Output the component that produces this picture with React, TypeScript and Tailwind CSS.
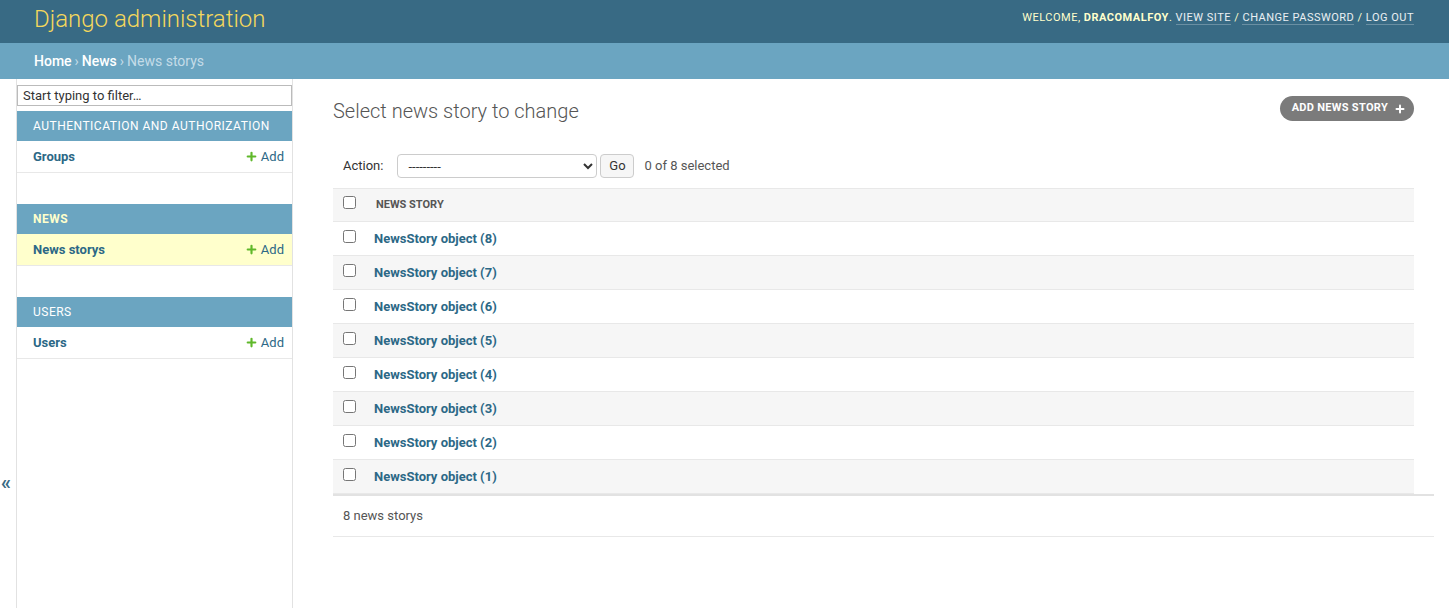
import { Plus } from 'lucide-react';

const stories = [8, 7, 6, 5, 4, 3, 2, 1];

const modules = [
  { caption: 'Authentication and Authorization', current: false, rows: ['Groups'] },
  { caption: 'News', current: true, rows: ['News storys'] },
  { caption: 'Users', current: false, rows: ['Users'] },
];

function Box() {
  return <input type="checkbox" className="m-0 h-[13px] w-[13px] rounded-[3px] accent-[#417690]" />;
}

export default function App() {
  return (
    <div className="min-h-screen bg-white text-[#333] font-['Roboto','Liberation_Sans',sans-serif]">
      {/* Header */}
      <header className="flex h-[43px] items-center justify-between bg-[#386a84] pl-[34px] pr-[35px]">
        <div className="-mt-[5px] text-[24px] font-light leading-none text-[#f5d85c]">Django administration</div>
        <div className="-mt-[7px] text-[11px] uppercase tracking-[0.5px] text-[#ffc]">
          Welcome, <strong className="font-bold">dracomalfoy</strong>.{' '}
          <a className="border-b border-white/25 text-white/90">View site</a> /{' '}
          <a className="border-b border-white/25 text-white/90">Change password</a> /{' '}
          <a className="border-b border-white/25 text-white/90">Log out</a>
        </div>
      </header>

      {/* Breadcrumbs */}
      <div className="flex h-[36px] items-center bg-[#6ba5c1] px-[34px] text-[14px] text-[#c4dce8]">
        <a className="font-medium text-white">Home</a>
        <span className="mx-[3px]">›</span>
        <a className="font-medium text-white">News</a>
        <span className="mx-[3px]">›</span>
        <span>News storys</span>
      </div>

      <div className="flex">
        {/* Sidebar toggle */}
        <div className="w-[17px] shrink-0 border-r border-[#e2e2e2] pt-[393px] text-[20px] leading-none text-[#386a84]">
          <span className="pl-[1px] font-bold">«</span>
        </div>

        {/* Sidebar */}
        <nav className="w-[276px] shrink-0 border-r border-[#e2e2e2] min-h-[529px]">
          <input
            className="mt-[6px] mb-[5px] block h-[21px] w-full border border-[#bbb] px-[5px] text-[13px] text-[#333] placeholder:text-[#333] outline-none"
            placeholder="Start typing to filter…"
          />
          {modules.map((m) => (
            <div key={m.caption} className="mb-[31px]">
              <div
                className={`flex h-[30px] items-center bg-[#6ba5c1] pl-[16px] text-[12px] uppercase tracking-[0.5px] ${m.current ? 'font-bold text-[#ffc]' : 'text-white'}`}
              >
                {m.caption}
              </div>
              {m.rows.map((r) => (
                <div
                  key={r}
                  className={`flex h-[32px] items-center justify-between border-b border-[#e8e8e8] pl-[16px] pr-[8px] text-[13px] ${m.current ? 'bg-[#ffffcc]' : ''}`}
                >
                  <a className="font-bold text-[#2c6886]">{r}</a>
                  <a className="flex items-center gap-[3px] text-[#2c6886]">
                    <Plus size={13} strokeWidth={4} className="text-[#5fb82a]" />
                    Add
                  </a>
                </div>
              ))}
            </div>
          ))}
        </nav>

        {/* Content */}
        <main className="flex-1 pl-[40px] pr-[15px] pt-[20px]">
          <div className="flex items-start justify-between pr-[20px]">
            <h1 className="text-[20px] font-light leading-[24px] text-[#555]">Select news story to change</h1>
            <a className="-mt-[3px] flex h-[25px] items-center gap-[6px] rounded-full bg-[#7b7b7b] pl-[12px] pr-[8px] text-[11px] font-bold uppercase tracking-[0.3px] text-white">
              Add news story
              <Plus size={12} strokeWidth={4} />
            </a>
          </div>

          <div className="mr-[20px] mt-[26px] flex h-[34px] items-center px-[10px] text-[13px] text-[#666]">
            <span className="mr-[14px] text-[#333]">Action:</span>
            <select className="h-[24px] w-[200px] rounded-[4px] border border-[#ccc] bg-white px-[6px] text-[13px] text-[#333]">
              <option>---------</option>
            </select>
            <button className="ml-[3px] h-[24px] w-[34px] rounded-[4px] border border-[#ccc] bg-[#f6f6f6] text-[13px] text-[#333]">
              Go
            </button>
            <span className="ml-[10px] text-[#555]">0 of 8 selected</span>
          </div>

          <table className="mt-[5px] w-[calc(100%-20px)] border-collapse text-[13px]">
            <thead>
              <tr className="h-[33px] border-y border-[#e8e8e8] bg-[#f6f6f6]">
                <th className="w-[33px] pl-[10px] text-left align-middle">
                  <Box />
                </th>
                <th className="pl-[10px] text-left text-[11px] font-bold uppercase text-[#555]">News story</th>
              </tr>
            </thead>
            <tbody>
              {stories.map((n, i) => (
                <tr key={n} className={`h-[34px] border-b border-[#e8e8e8] ${i % 2 ? 'bg-[#f6f6f6]' : 'bg-white'}`}>
                  <td className="pl-[10px] align-middle">
                    <Box />
                  </td>
                  <td className="pl-[8px] font-bold text-[#2c6886]">NewsStory object ({n})</td>
                </tr>
              ))}
            </tbody>
          </table>

          <div className="flex h-[43px] items-center border-y border-t-[2px] border-[#e2e2e2] border-b-[#e8e8e8] pl-[10px] text-[13px] text-[#555]">
            8 news storys
          </div>
        </main>
      </div>
    </div>
  );
}
